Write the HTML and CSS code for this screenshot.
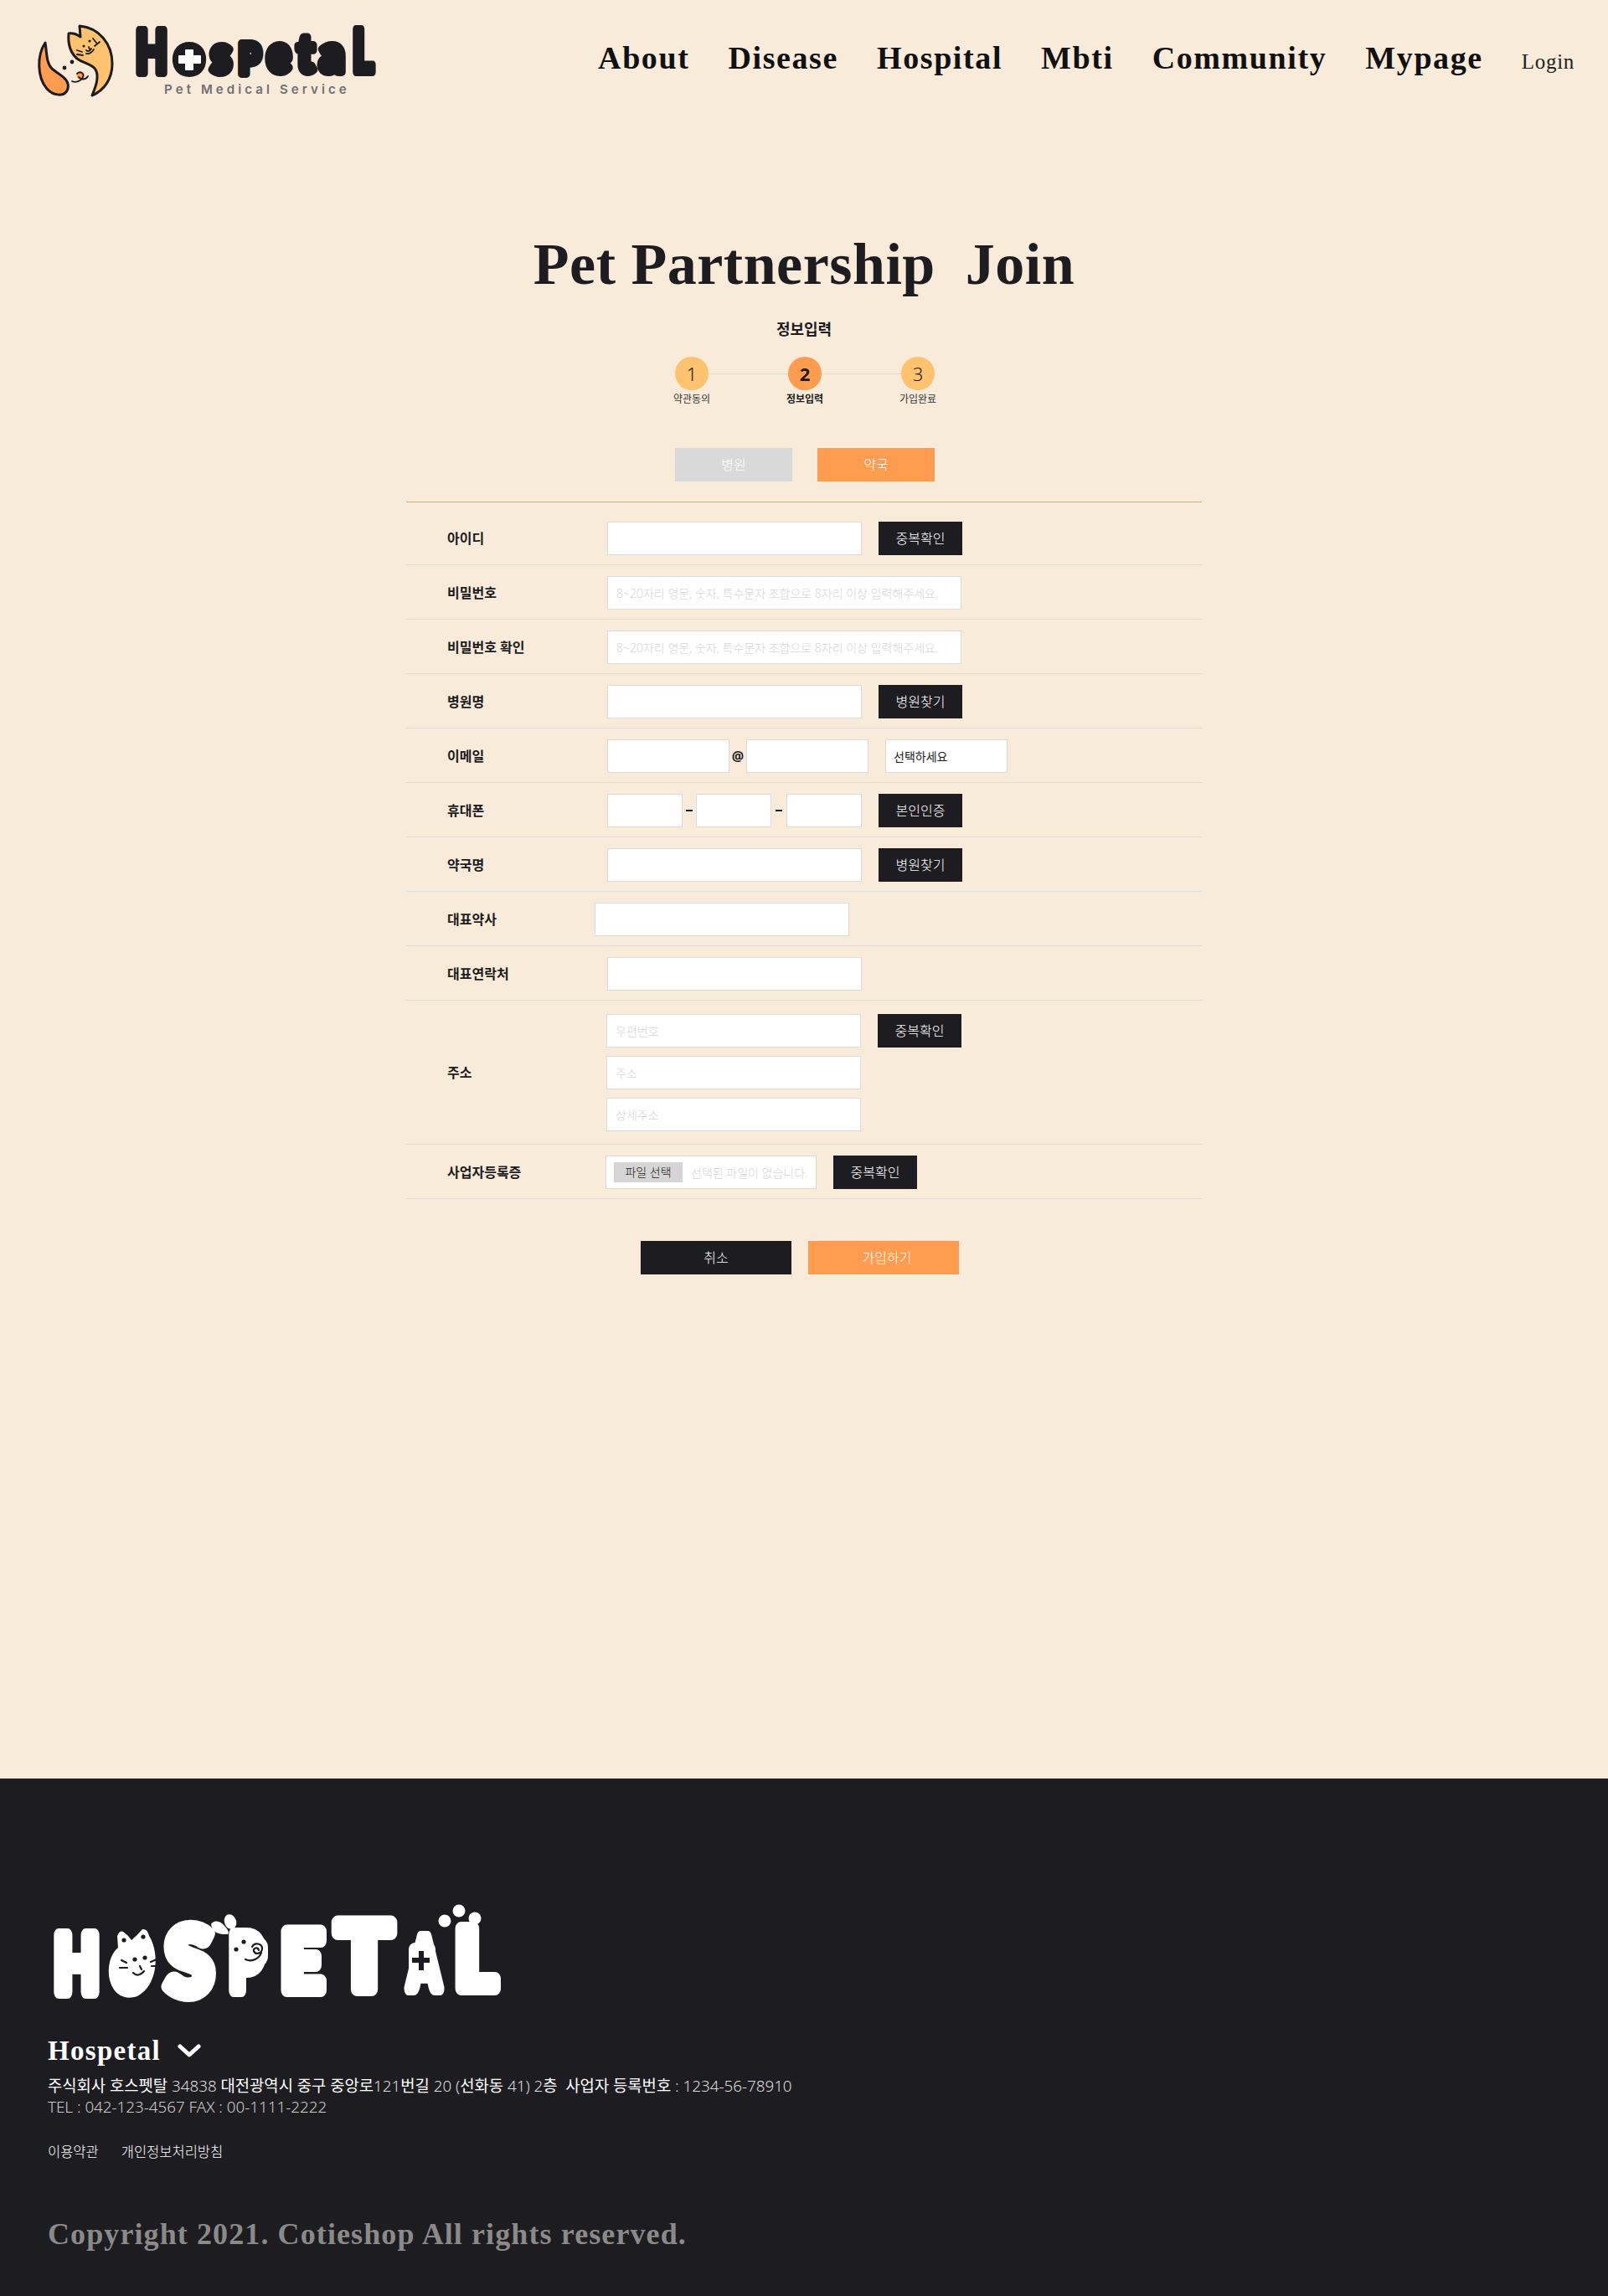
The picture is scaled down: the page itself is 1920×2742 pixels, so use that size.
FILE: index.html
```html
<!DOCTYPE html>
<html lang="ko">
<head>
<meta charset="utf-8">
<title>Pet Partnership Join</title>
<link rel="stylesheet" href="styles.css">
</head>
<body>
<header class="site-header">
  <svg class="logo" viewBox="0 0 460 150" width="460" height="150" aria-label="Hospetal">
    <path class="ink-line flame" d="M54 51C44 66 44 92 56 106C64 115 78 116 81 106C84 94 70 89 62 82C55 75 56 62 54 51Z"/>
    <path class="ink-line cat" d="M82 40Q89 39 96 44L95 31C118 33 134 52 134 76C134 95 124 108 110 114C114 104 119 92 114 83C110 76 100 76 92 70C84 63 81 52 82 40Z"/>
    <circle class="ink" cx="100" cy="55" r="1.6"/><circle class="ink" cx="107" cy="49" r="1.6"/>
    <path class="ink-thin" d="M92 60L98 62M92 65L99 66M111 46L115 51M113 55L119 50M103 60Q106 63 109 58M106 56L107 59M103 64Q108 65 112 59"/>
    <circle class="ink" cx="77" cy="81" r="2.4"/><circle class="ink" cx="86" cy="74" r="2.4"/>
    <circle class="orange-dot" cx="96" cy="90" r="4.5"/>
    <path class="ink-thin" d="M92 88C96 84 101 88 99 92C97 97 90 99 86 97M94 92C96 95 102 96 105 91"/>
    <text class="wm" x="162" y="87" textLength="38" lengthAdjust="spacingAndGlyphs">H</text>
    <text class="wm wm-small" x="209" y="87" textLength="34" lengthAdjust="spacingAndGlyphs">o</text>
    <text class="wm wm-small" x="252" y="87" textLength="24" lengthAdjust="spacingAndGlyphs">s</text>
    <text class="wm wm-cap" x="285" y="88" textLength="26" lengthAdjust="spacingAndGlyphs">P</text>
    <text class="wm wm-small" x="319" y="86" textLength="28" lengthAdjust="spacingAndGlyphs">e</text>
    <text class="wm wm-small" x="355" y="86" textLength="20" lengthAdjust="spacingAndGlyphs">t</text>
    <text class="wm wm-small" x="382" y="86" textLength="29" lengthAdjust="spacingAndGlyphs">a</text>
    <text class="wm" x="421" y="86" textLength="25" lengthAdjust="spacingAndGlyphs">L</text>
    <circle class="ink" cx="226" cy="71" r="19"/>
    <path class="plus" d="M222 60H230V67H239V75H230V83H222V75H214V67H222Z"/>
    <text class="tagline" x="196" y="112">Pet Medical Service</text>
  </svg>
  <nav class="main-nav">
    <a class="nav-link">About</a>
    <a class="nav-link">Disease</a>
    <a class="nav-link">Hospital</a>
    <a class="nav-link">Mbti</a>
    <a class="nav-link">Community</a>
    <a class="nav-link">Mypage</a>
    <a class="nav-login">Login</a>
  </nav>
</header>

<main class="page">
  <h1 class="page-title">Pet Partnership &nbsp;Join</h1>
  <h2 class="step-title">정보입력</h2>
  <ol class="steps">
    <li class="step"><span class="step-num">1</span><span class="step-label">약관동의</span></li>
    <li class="step step-on"><span class="step-num">2</span><span class="step-label">정보입력</span></li>
    <li class="step"><span class="step-num">3</span><span class="step-label">가입완료</span></li>
  </ol>
  <div class="tabs">
    <button class="tab tab-off" type="button">병원</button>
    <button class="tab tab-on" type="button">약국</button>
  </div>

  <form class="form">
    <div class="row row-first">
      <label class="row-label">아이디</label>
      <div class="field"><input class="input" type="text"><button class="btn" type="button">중복확인</button></div>
    </div>
    <div class="row">
      <label class="row-label">비밀번호</label>
      <div class="field"><input class="input input-long" type="password" placeholder="8~20자리 영문, 숫자, 특수문자 조합으로 8자리 이상 입력해주세요."></div>
    </div>
    <div class="row">
      <label class="row-label">비밀번호 확인</label>
      <div class="field"><input class="input input-long" type="password" placeholder="8~20자리 영문, 숫자, 특수문자 조합으로 8자리 이상 입력해주세요."></div>
    </div>
    <div class="row">
      <label class="row-label">병원명</label>
      <div class="field"><input class="input" type="text"><button class="btn" type="button">병원찾기</button></div>
    </div>
    <div class="row">
      <label class="row-label">이메일</label>
      <div class="field">
        <input class="input input-mail" type="text"><span class="at">@</span><input class="input input-mail" type="text">
        <select class="input input-mail select"><option>선택하세요</option></select>
      </div>
    </div>
    <div class="row">
      <label class="row-label">휴대폰</label>
      <div class="field">
        <input class="input input-tel" type="text"><span class="dash"></span><input class="input input-tel" type="text"><span class="dash dash-wide"></span><input class="input input-tel" type="text"><button class="btn" type="button">본인인증</button>
      </div>
    </div>
    <div class="row">
      <label class="row-label">약국명</label>
      <div class="field"><input class="input" type="text"><button class="btn" type="button">병원찾기</button></div>
    </div>
    <div class="row row-shifted">
      <label class="row-label">대표약사</label>
      <div class="field"><input class="input" type="text"></div>
    </div>
    <div class="row">
      <label class="row-label">대표연락처</label>
      <div class="field"><input class="input" type="text"></div>
    </div>
    <div class="row row-address">
      <label class="row-label">주소</label>
      <div class="address">
        <div class="field"><input class="input" type="text" placeholder="우편번호"><button class="btn" type="button">중복확인</button></div>
        <input class="input" type="text" placeholder="주소">
        <input class="input" type="text" placeholder="상세주소">
      </div>
    </div>
    <div class="row row-file">
      <label class="row-label">사업자등록증</label>
      <div class="field">
        <div class="file"><span class="file-btn">파일 선택</span><span class="file-name">선택된 파일이 없습니다.</span></div>
        <button class="btn" type="button">중복확인</button>
      </div>
    </div>
    <div class="actions">
      <button class="action action-dark" type="button">취소</button>
      <button class="action action-orange" type="button">가입하기</button>
    </div>
  </form>
</main>

<footer class="site-footer">
  <svg class="footer-logo" viewBox="50 2270 560 130" width="560" height="130" aria-label="Hospetal">
    <text class="fm fm-h" x="65" y="2379" textLength="53" lengthAdjust="spacingAndGlyphs">H</text>
    <text class="fm fm-s" x="198" y="2382" textLength="56" lengthAdjust="spacingAndGlyphs">S</text>
    <text class="fm fm-p" x="274" y="2377" textLength="40" lengthAdjust="spacingAndGlyphs">P</text>
    <text class="fm fm-e" x="336" y="2377" textLength="50" lengthAdjust="spacingAndGlyphs">E</text>
    <text class="fm fm-t" x="402" y="2376" textLength="66" lengthAdjust="spacingAndGlyphs">T</text>
    <text class="fm fm-a" x="488" y="2375" textLength="37" lengthAdjust="spacingAndGlyphs">A</text>
    <text class="fm fm-l" x="544" y="2375" textLength="48" lengthAdjust="spacingAndGlyphs">L</text>
    <path class="white" d="M140 2312Q143 2305 147 2307Q153 2311 157 2317Q164 2311 170 2304Q176 2303 178 2312C190 2330 190 2370 164 2384C140 2392 128 2370 130 2350C131 2338 136 2330 141 2326Z"/>
    <circle class="dark" cx="148" cy="2317" r="2.6"/><circle class="dark" cx="171" cy="2313" r="2.6"/>
    <circle class="dark" cx="161" cy="2340" r="2.6"/><circle class="dark" cx="173" cy="2338" r="2.6"/>
    <path class="dark-line" d="M145 2341L151 2344M143 2350L152 2350M180 2343L187 2340M181 2348L187 2348M159 2356Q165 2362 172 2354M167 2348L169 2352"/>
    <ellipse class="white" cx="275" cy="2295" rx="7" ry="9" transform="rotate(-20 275 2295)"/>
    <path class="white" d="M252 2298C256 2292 264 2294 268 2300C272 2304 274 2308 272 2310C264 2310 254 2310 252 2298Z"/>
    <rect class="white" x="285" y="2312" width="35" height="38" rx="14"/>
    <circle class="dark" cx="291" cy="2319" r="2.6"/><circle class="dark" cx="282" cy="2328" r="2.6"/>
    <path class="dark-line" d="M301 2325C304 2319 313 2321 313 2327C313 2333 305 2335 303 2330C302 2326 308 2325 309 2329M312 2332C310 2338 302 2344 293 2340"/>
    <rect class="white" x="488" y="2320" width="32" height="46" rx="8"/>
    <path class="dark" d="M500 2330H506V2338H513V2344H506V2353H500V2344H492V2338H500Z"/>
    <circle class="white" cx="531" cy="2294" r="7.5"/><circle class="white" cx="548" cy="2282" r="7.5"/><circle class="white" cx="567" cy="2291" r="7.5"/>
  </svg>
  <div class="company">
    <span class="company-name">Hospetal</span>
    <svg class="chevron" viewBox="0 0 28 16" width="28" height="16"><path d="M3 3L14 13L25 3"/></svg>
  </div>
  <p class="info"><span class="reg">주식회사 호스펫탈</span> 34838 <span class="reg">대전광역시 중구 중앙로</span>121<span class="reg">번길</span> 20 (<span class="reg">선화동</span> 41) 2<span class="reg">층 &nbsp;사업자 등록번호</span> : 1234-56-78910</p>
  <p class="info info-tel">TEL : 042-123-4567 FAX : 00-1111-2222</p>
  <div class="footer-links"><a class="footer-link">이용약관</a><a class="footer-link">개인정보처리방침</a></div>
  <p class="copyright">Copyright 2021. Cotieshop All rights reserved.</p>
</footer>
</body>
</html>
```
FILE: styles.css
```css
* { box-sizing: border-box; }
html, body { margin: 0; padding: 0; }
body {
  background: #f8ebd9;
  color: #1c1c21;
  font-family: "Noto Sans", "Noto Sans CJK KR", sans-serif;
}
button, input, select { font-family: inherit; }

/* header */
.site-header {
  height: 150px;
  display: flex;
  justify-content: space-between;
  align-items: flex-start;
  padding-right: 40px;
}
.logo { display: block; flex: none; }
.ink { fill: #1c1c21; }
.ink-line { stroke: #1c1c21; stroke-width: 3; stroke-linejoin: round; }
.ink-thin { fill: none; stroke: #1c1c21; stroke-width: 1.8; stroke-linecap: round; }
.flame { fill: #ff9c50; }
.cat { fill: #ffc26e; }
.orange-dot { fill: #ff9c50; }
.plus { fill: #fff; stroke: #fff; stroke-width: 2; stroke-linejoin: round; }
.wm {
  font-family: Lato, sans-serif;
  font-weight: 900;
  font-size: 70px;
  fill: #1c1c21;
  stroke: #1c1c21;
  stroke-width: 10;
  stroke-linejoin: round;
}
.wm-small { font-size: 60px; }
.wm-cap { font-size: 50px; }
.tagline {
  font-family: Inter, sans-serif;
  font-weight: 600;
  font-size: 15px;
  letter-spacing: 4.1px;
  fill: #6f6f74;
}
.main-nav {
  display: flex;
  align-items: baseline;
  gap: 46px;
  padding-top: 47px;
  font-family: "Liberation Serif", serif;
}
.nav-link { font-size: 38px; line-height: 44px; font-weight: 700; letter-spacing: 1.6px; color: #111; }
.nav-login { font-size: 25px; font-weight: 400; letter-spacing: 0.7px; color: #222; }

/* title & steps */
.page { height: 1974px; padding-top: 126px; }
.page-title {
  margin: 0;
  text-align: center;
  font-family: "Liberation Serif", serif;
  font-weight: 700;
  font-size: 70px;
  line-height: 80px;
  letter-spacing: 0.5px;
}
.step-title {
  margin: 24px 0 0;
  text-align: center;
  font-size: 18px;
  line-height: 26px;
  font-weight: 700;
}
.steps {
  list-style: none;
  margin: 20px auto 0;
  padding: 0 0 0 2px;
  width: 312px;
  display: flex;
  justify-content: space-between;
  background: linear-gradient(#ddd, #ddd) center 20px / 270px 1px no-repeat;
}
.step { width: 40px; display: flex; flex-direction: column; align-items: center; }
.step-num {
  width: 40px;
  height: 40px;
  border-radius: 50%;
  background: #ffc26e;
  display: flex;
  align-items: center;
  justify-content: center;
  font-size: 22px;
  font-weight: 300;
}
.step-label { margin-top: 2px; font-size: 12px; line-height: 18px; white-space: nowrap; color: #333; }
.step-on .step-num { background: #ff9c50; font-weight: 700; }
.step-on .step-label { font-weight: 700; color: #1c1c21; }
.tabs { margin-top: 49px; display: flex; justify-content: center; gap: 30px; padding-left: 2px; }
.tab {
  width: 140px;
  height: 40px;
  border: 0;
  padding: 0 0 2px;
  color: #fff;
  font-size: 16px;
  font-weight: 300;
}
.tab-off { background: #d9d9d9; }
.tab-on { background: #ff9c50; }

/* form */
.form { width: 950px; margin: 24px auto 0; border-top: 1px solid #ff9c50; }
.row {
  display: flex;
  align-items: center;
  padding: 13px 0 11px 49px;
  border-bottom: 1px solid #dcdcdc;
}
.row-first { padding-top: 23px; }
.row-label { width: 191px; flex: none; font-size: 16px; font-weight: 700; line-height: 24px; }
.row-shifted .row-label { width: 176px; }
.field { display: flex; align-items: center; }
.input {
  display: block;
  width: 304px;
  height: 40px;
  border: 1px solid #dcdcdc;
  background: #fff;
  padding: 0 10px;
  font-size: 14px;
  font-weight: 300;
  border-radius: 0;
  outline: 0;
}
.input::placeholder { color: #d6d6d6; opacity: 1; }
.input-long { width: 423px; }
.input-mail { width: 146px; }
.input-tel { width: 90px; }
.select { margin-left: 20px; padding-left: 9px; appearance: none; color: #1c1c21; font-weight: 400; }
.at { width: 20px; text-align: center; font-size: 16px; font-weight: 700; }
.dash { width: 8px; height: 2px; margin: 0 4px; background: #1c1c21; }
.dash-wide { margin: 0 5px; }
.btn {
  width: 100px;
  height: 40px;
  margin-left: 20px;
  border: 0;
  padding: 0 0 2px;
  background: #1c1c21;
  color: #fff;
  font-size: 16px;
  font-weight: 300;
  flex: none;
}
.row-address { padding: 16px 0 15px 49px; }
.row-address .row-label { width: 190px; }
.address { display: flex; flex-direction: column; gap: 10px; }
.row-file .row-label { width: 189px; }
.file {
  width: 252px;
  height: 40px;
  border: 1px solid #dcdcdc;
  background: #fff;
  padding: 0 9px;
  display: flex;
  align-items: center;
  font-size: 14px;
  font-weight: 300;
}
.file-btn {
  width: 82px;
  height: 24px;
  background: #d5d5d5;
  text-align: center;
  line-height: 24px;
  flex: none;
}
.file-name { margin-left: 10px; color: #d6d6d6; white-space: nowrap; }
.actions { margin-top: 50px; display: flex; justify-content: center; gap: 20px; padding-right: 10px; }
.action { width: 180px; height: 40px; border: 0; padding: 0 0 2px; color: #fff; font-size: 16px; font-weight: 300; }
.action-dark { background: #1c1c21; }
.action-orange { background: #ff9c50; padding-left: 8px; }

/* footer */
.site-footer {
  height: 618px;
  background: #1c1c21;
  color: #fff;
  padding: 146px 0 0 50px;
}
.footer-logo { display: block; }
.white { fill: #fff; }
.dark { fill: #1c1c21; }
.dark-line { fill: none; stroke: #1c1c21; stroke-width: 2.2; stroke-linecap: round; }
.fm {
  font-family: Lato, sans-serif;
  font-weight: 900;
  fill: #fff;
  stroke: #fff;
  stroke-width: 16;
  stroke-linejoin: round;
}
.fm-h { font-size: 94px; }
.fm-s { font-size: 111px; }
.fm-p { font-size: 92px; }
.fm-e { font-size: 98px; }
.fm-t { font-size: 111px; }
.fm-a { font-size: 84px; }
.fm-l { font-size: 100px; }
.company { margin: 31px 0 0 7px; display: flex; align-items: center; gap: 20px; height: 36px; }
.company-name { font-family: "Liberation Serif", serif; font-size: 33px; font-weight: 700; letter-spacing: 1.3px; }
.chevron { fill: none; stroke: #fff; stroke-width: 5; stroke-linecap: round; stroke-linejoin: round; }
.info { margin: 11px 0 0 7px; font-size: 18.8px; line-height: 26px; white-space: pre-wrap; font-weight: 300; color: #ddd; }
.reg { font-weight: 400; color: #fff; }
.info-tel { margin-top: -1px; color: #ccc; }
.footer-links { margin: 30px 0 0 7px; display: flex; gap: 27px; font-size: 16.5px; line-height: 22px; font-weight: 300; }
.copyright {
  margin: 62px 0 0 7px;
  font-family: "Liberation Serif", serif;
  font-size: 36px;
  font-weight: 700;
  line-height: 50px;
  letter-spacing: 1.1px;
  color: #8a8a88;
}
```
